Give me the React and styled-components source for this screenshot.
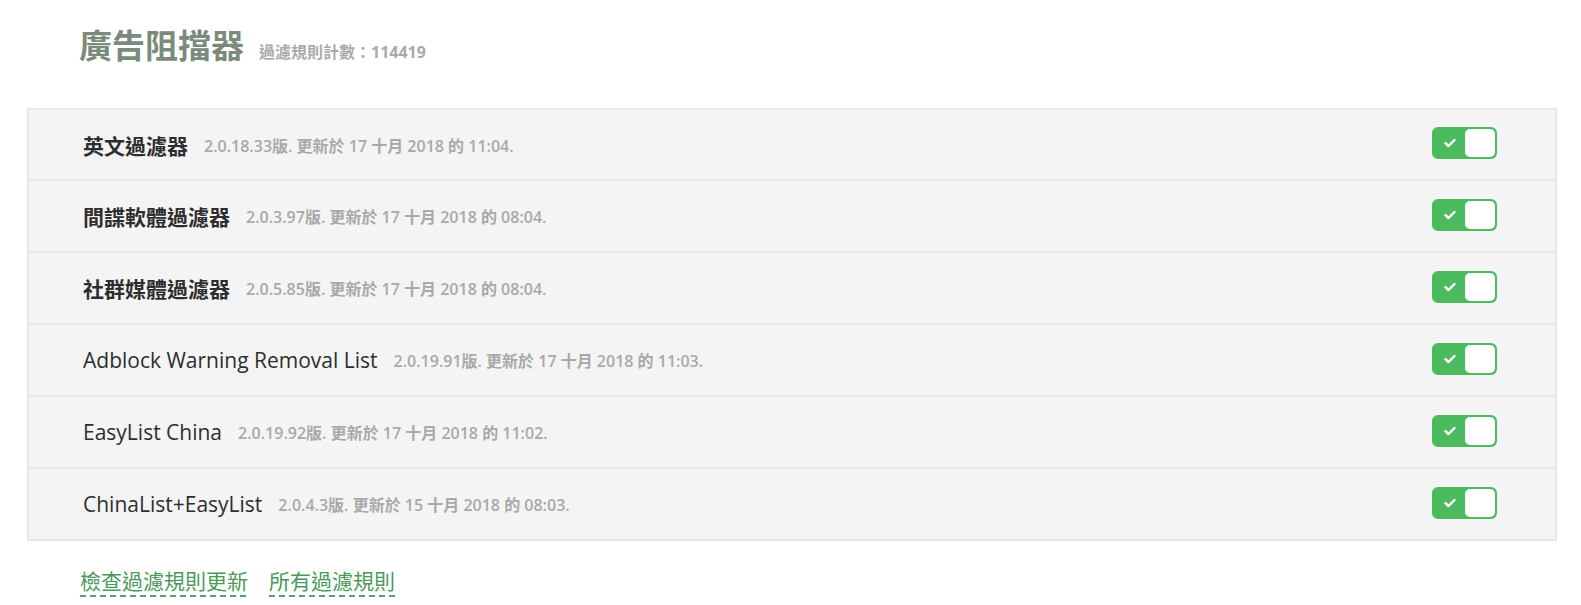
import React from "react";
import styled, { createGlobalStyle } from "styled-components";

const Global = createGlobalStyle`
  html, body { margin: 0; padding: 0; background: #ffffff; }
  body { font-family: "Open Sans", "Noto Sans CJK TC", sans-serif; }
`;

const Page = styled.div`
  padding: 0 24px 0 27px;
`;

const Header = styled.header`
  display: flex;
  align-items: baseline;
  gap: 15px;
  box-sizing: content-box;
  height: 64px;
  padding: 22px 0 22px 52px;
`;

const Title = styled.h1`
  margin: 0;
  font-family: "Noto Sans CJK TC", sans-serif;
  font-size: 33px;
  font-weight: 700;
  line-height: 44px;
  color: #7a8b7c;
`;

const Count = styled.span`
  font-family: "Open Sans", "Noto Sans CJK TC", sans-serif;
  font-size: 16px;
  font-weight: 700;
  color: #aaaaaa;
`;

const List = styled.ul`
  list-style: none;
  margin: 0;
  padding: 0;
  border: 2px solid #e7e7e7;
  background: #f4f4f4;
`;

const Row = styled.li`
  display: flex;
  align-items: center;
  height: 70px;
  padding: 0 58px 0 54px;
  &:first-child { height: 69px; }
  & + & { border-top: 2px solid #e7e7e7; }
`;

const Name = styled.span`
  font-family: "Open Sans", "Noto Sans CJK TC", sans-serif;
  font-size: 21px;
  font-weight: ${(p) => (p.$cjk ? 700 : 400)};
  color: #2e2e2e;
`;

const Meta = styled.span`
  margin-left: 16px;
  font-family: "Open Sans", "Noto Sans CJK TC", sans-serif;
  font-size: 16px;
  font-weight: 600;
  color: #a9a9a9;
  flex: 1;
`;

const Toggle = styled.button`
  display: flex;
  align-items: center;
  width: 65px;
  height: 32px;
  margin-bottom: 3px;
  padding: 0;
  border: 2px solid #4cbb5f;
  border-radius: 6px;
  background: #4cbb5f;
  cursor: pointer;
  box-sizing: border-box;
`;

const CheckZone = styled.span`
  display: flex;
  align-items: center;
  justify-content: center;
  width: 31px;
  height: 100%;
`;

const Knob = styled.span`
  width: 30px;
  height: 28px;
  border-radius: 5px;
  background: #ffffff;
`;

const Links = styled.nav`
  display: flex;
  gap: 21px;
  padding: 25px 0 0 53px;
`;

const Link = styled.a`
  font-family: "Noto Sans CJK TC", sans-serif;
  font-size: 21px;
  line-height: 28px;
  color: #4a9a5a;
  text-decoration: none;
  padding-bottom: 3px;
  background-image: repeating-linear-gradient(to right, #5aa06a 0 6px, transparent 6px 10px);
  background-size: 100% 2px;
  background-position: 0 100%;
  background-repeat: no-repeat;
  cursor: pointer;
`;

const Check = () => (
  <svg width="12" height="10" viewBox="0 0 12 10">
    <path d="M1.5 5.2 L4.5 8 L10.5 2" fill="none" stroke="#ffffff" strokeWidth="2.4" strokeLinecap="round" strokeLinejoin="round" />
  </svg>
);

const filters = [
  { name: "英文過濾器", cjk: true, meta: "2.0.18.33版. 更新於 17 十月 2018 的 11:04." },
  { name: "間諜軟體過濾器", cjk: true, meta: "2.0.3.97版. 更新於 17 十月 2018 的 08:04." },
  { name: "社群媒體過濾器", cjk: true, meta: "2.0.5.85版. 更新於 17 十月 2018 的 08:04." },
  { name: "Adblock Warning Removal List", meta: "2.0.19.91版. 更新於 17 十月 2018 的 11:03." },
  { name: "EasyList China", meta: "2.0.19.92版. 更新於 17 十月 2018 的 11:02." },
  { name: "ChinaList+EasyList", meta: "2.0.4.3版. 更新於 15 十月 2018 的 08:03." },
];

export default function App() {
  return (
    <Page>
      <Global />
      <Header>
        <Title>廣告阻擋器</Title>
        <Count>過濾規則計數：114419</Count>
      </Header>
      <List>
        {filters.map((f) => (
          <Row key={f.name}>
            <Name $cjk={f.cjk}>{f.name}</Name>
            <Meta>{f.meta}</Meta>
            <Toggle aria-pressed="true">
              <CheckZone><Check /></CheckZone>
              <Knob />
            </Toggle>
          </Row>
        ))}
      </List>
      <Links>
        <Link>檢查過濾規則更新</Link>
        <Link>所有過濾規則</Link>
      </Links>
    </Page>
  );
}
